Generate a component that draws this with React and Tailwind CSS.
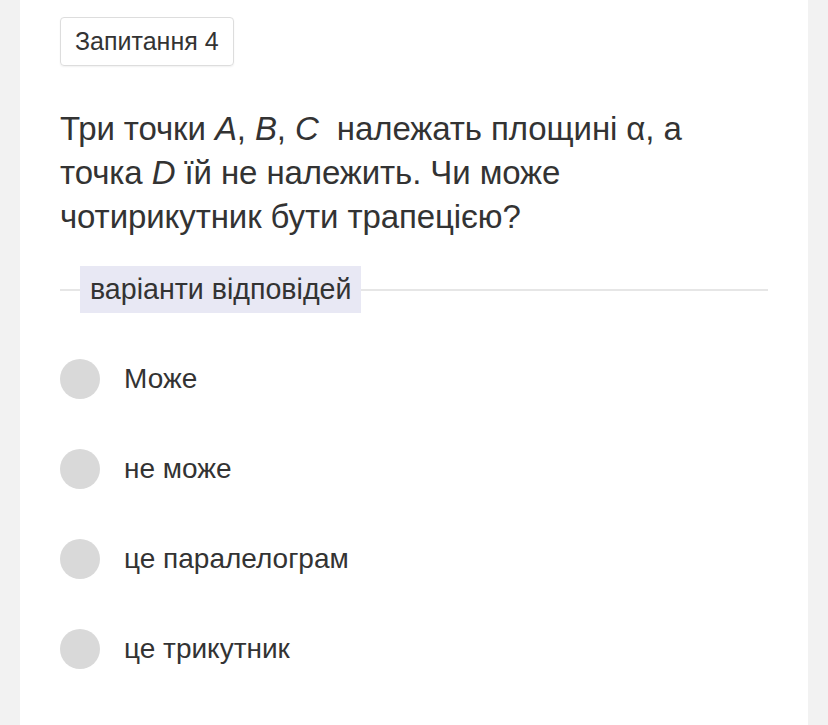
export default function App() {
  const options = ["Може", "не може", "це паралелограм", "це трикутник"];
  return (
    <div className="min-h-[725px] bg-[#f2f2f2] px-[20px]" style={{ fontFamily: '"Liberation Sans", Arial, sans-serif' }}>
      <div className="bg-white min-h-[725px] px-[40px] pt-[17px] text-[#333333]">
        <div className="inline-flex h-[49px] items-center rounded-[4px] border border-[#dddddd] px-[14px] text-[25px] shadow-[0_1px_2px_rgba(0,0,0,0.06)]">
          Запитання 4
        </div>
        <p className="mt-[41px] text-[33px] leading-[44px] max-w-[708px] tracking-[-0.1px]">
          Три точки <i>A</i>, <i>B</i>, <i>C</i>&nbsp; належать площині α, а точка <i>D</i> їй не належить. Чи може чотирикутник бути трапецією?
        </p>
        <div className="mt-[27px] flex items-center">
          <div className="h-[2px] w-[20px] bg-[#e6e6e6]" />
          <div className="flex h-[47px] items-center bg-[#e8e8f4] px-[10px] text-[28.6px]">варіанти відповідей</div>
          <div className="h-[2px] flex-1 bg-[#e6e6e6]" />
        </div>
        <div className="mt-[46px] flex flex-col gap-[50px]">
          {options.map((o) => (
            <div key={o} className="flex h-[40px] items-center gap-[24px]">
              <div className="h-[40px] w-[40px] shrink-0 rounded-full bg-[#d9d9d9]" />
              <span className="text-[28px] leading-[40px]">{o}</span>
            </div>
          ))}
        </div>
      </div>
    </div>
  );
}
